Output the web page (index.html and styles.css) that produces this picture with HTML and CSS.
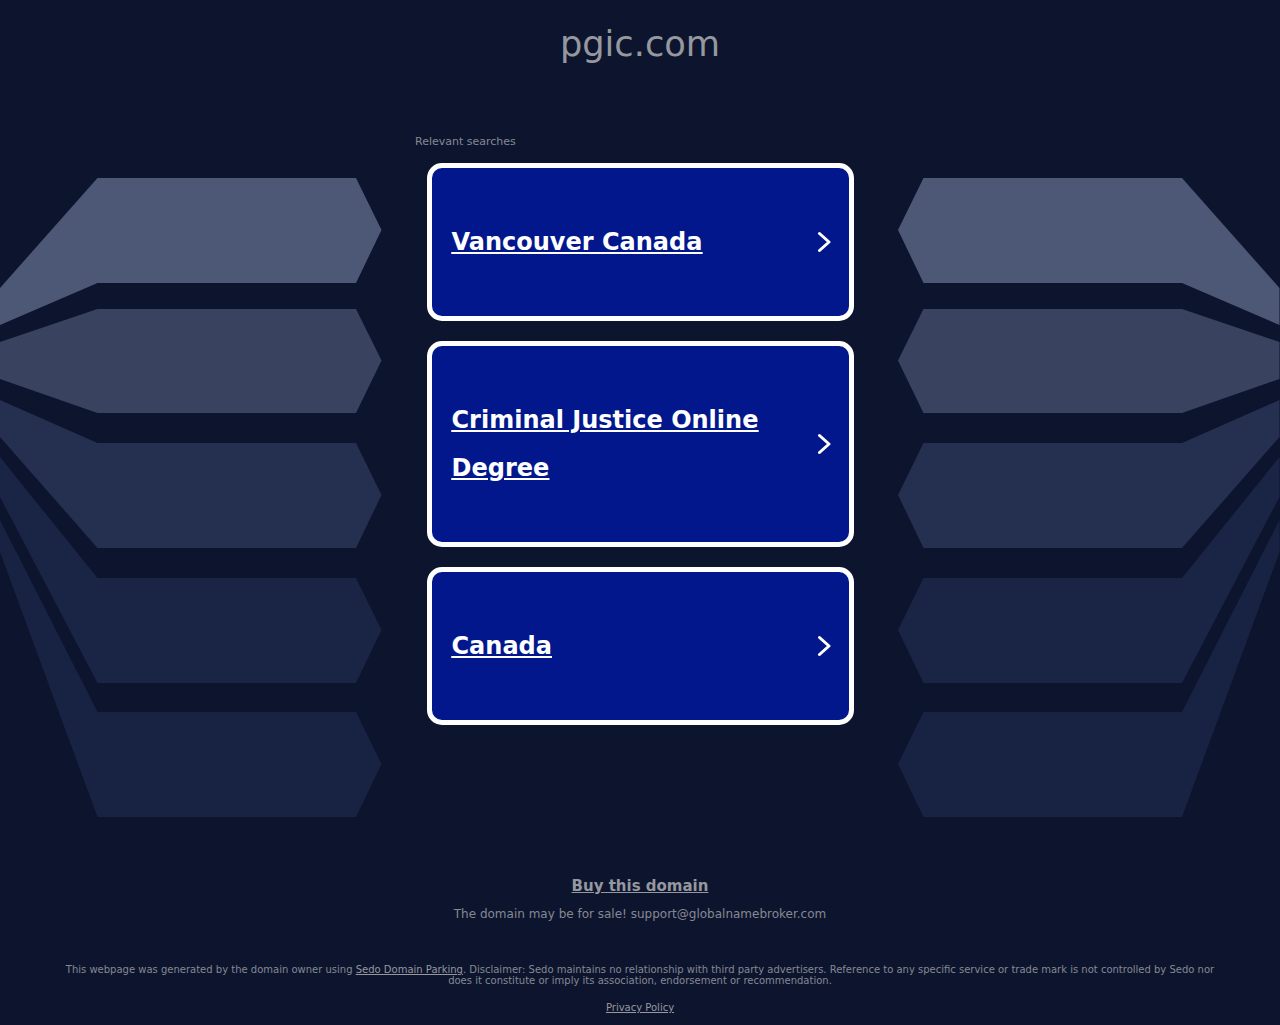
FILE: index.html

```html
<!DOCTYPE html>
<html lang="en">
<head>
  <meta charset="UTF-8" />
  <meta name="viewport" content="width=device-width, initial-scale=1" />
  <title>pgic.com</title>
  <link rel="stylesheet" href="styles.css">
</head>
<body>
  <svg class="backdrop" viewBox="0 0 1280 1025" aria-hidden="true">
    <defs>
      <g id="wing">
        <polygon fill="#4c5875" points="97.5,178 356,178 381.5,230 356,283 97.5,283 0,325 0,288" />
        <polygon fill="#394360" points="97.5,309 356,309 381.5,360.5 356,413 97.5,413 0,379 0,342" />
        <polygon fill="#252f4f" points="97.5,443 356,443 381.5,495 356,548 97.5,548 0,437 0,400" />
        <polygon fill="#1a2445" points="97.5,578 356,578 381.5,630 356,683 97.5,683 0,497 0,457" />
        <polygon fill="#182343" points="97.5,712 356,712 381.5,764 356,817 97.5,817 0,552 0,520" />
      </g>
    </defs>
    <use href="#wing" />
    <use href="#wing" transform="translate(1279.5) scale(-1,1)" />
  </svg>

  <main class="page">
    <h1 class="domain">pgic.com</h1>

    <section class="searches">
      <p class="searches-label">Relevant searches</p>

      <a class="search-card" href="#">
        <span class="search-text">Vancouver Canada</span>
        <svg class="chevron" viewBox="0 0 14 22"><polyline points="2.5,2.5 12,11 2.5,19.5" /></svg>
      </a>
      <a class="search-card" href="#">
        <span class="search-text">Criminal Justice Online Degree</span>
        <svg class="chevron" viewBox="0 0 14 22"><polyline points="2.5,2.5 12,11 2.5,19.5" /></svg>
      </a>
      <a class="search-card" href="#">
        <span class="search-text">Canada</span>
        <svg class="chevron" viewBox="0 0 14 22"><polyline points="2.5,2.5 12,11 2.5,19.5" /></svg>
      </a>
    </section>

    <section class="sale">
      <a class="sale-link" href="#">Buy this domain</a>
      <p class="sale-note">The domain may be for sale! support@globalnamebroker.com</p>
    </section>

    <footer class="legal">
      <p class="disclaimer">This webpage was generated by the domain owner using <a href="#">Sedo Domain Parking</a>. Disclaimer: Sedo maintains no relationship with third party advertisers. Reference to any specific service or trade mark is not controlled by Sedo nor does it constitute or imply its association, endorsement or recommendation.</p>
      <a class="privacy" href="#">Privacy Policy</a>
    </footer>
  </main>
</body>
</html>
```

FILE: styles.css

```css
body {
  margin: 0;
  background: #0d152e;
  color: #96989f;
  font-family: "DejaVu Sans", sans-serif;
}

.backdrop {
  position: absolute;
  top: 0;
  left: 0;
  width: 1280px;
  height: 1025px;
}

.page {
  position: relative;
  height: 1025px;
  overflow: hidden;
}

.domain {
  margin: 0;
  padding-top: 22px;
  font-size: 35.2px;
  font-weight: normal;
  line-height: 44px;
  text-align: center;
  color: #96989f;
}

.searches {
  width: 450px;
  margin: 69px auto 0;
}

.searches-label {
  margin: 0 0 15px;
  font-size: 11px;
  line-height: 13px;
  color: #858893;
}

.search-card {
  display: flex;
  align-items: center;
  justify-content: space-between;
  width: 427px;
  box-sizing: border-box;
  margin: 0 auto 20px;
  padding: 50px 18px 50px 20px;
  background: #02178c;
  border: 5px solid #fff;
  border-radius: 15px;
  color: #fff;
}

.search-text {
  width: 330px;
  font-size: 24px;
  font-weight: bold;
  line-height: 48px;
  text-decoration: underline;
}

.chevron {
  flex: none;
  width: 14px;
  height: 22px;
  fill: none;
  stroke: #fff;
  stroke-width: 3;
  stroke-linecap: round;
  stroke-linejoin: round;
}

.sale {
  margin-top: 151px;
  text-align: center;
}

.sale-link {
  display: block;
  font-size: 15px;
  font-weight: bold;
  line-height: 20px;
  color: #96989f;
}

.sale-note {
  margin: 10px 0 0;
  font-size: 12px;
  line-height: 16px;
  color: #858893;
}

.legal {
  width: 1150px;
  margin: 42px auto 0;
  text-align: center;
  font-size: 10px;
  line-height: 11px;
  color: #858893;
}

.disclaimer {
  margin: 0;
}

.legal a {
  color: #96989f;
}

.privacy {
  display: block;
  margin-top: 16px;
}
```
